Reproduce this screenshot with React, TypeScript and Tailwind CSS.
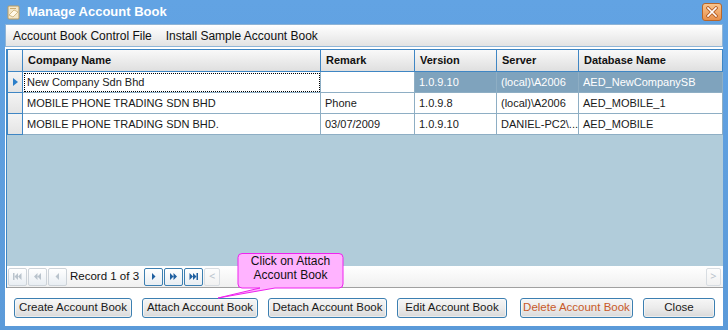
import React from "react";

const cols = [
  { key: "company", label: "Company Name", w: "w-[298px]" },
  { key: "remark", label: "Remark", w: "w-[94px]" },
  { key: "version", label: "Version", w: "w-[82px]" },
  { key: "server", label: "Server", w: "w-[82px]" },
  { key: "db", label: "Database Name", w: "w-[144px]" },
];

const rows = [
  { company: "New Company Sdn Bhd", remark: "", version: "1.0.9.10", server: "(local)\\A2006", db: "AED_NewCompanySB" },
  { company: "MOBILE PHONE TRADING SDN BHD", remark: "Phone", version: "1.0.9.8", server: "(local)\\A2006", db: "AED_MOBILE_1" },
  { company: "MOBILE PHONE TRADING SDN BHD.", remark: "03/07/2009", version: "1.0.9.10", server: "DANIEL-PC2\\...", db: "AED_MOBILE" },
];

const ui = { fontFamily: '"Liberation Sans", Arial, sans-serif' };
const grid = { fontFamily: '"Liberation Sans", Arial, sans-serif' };

function NavButton({ kind, enabled }: { kind: "first" | "prev2" | "prev" | "next" | "next2" | "last"; enabled: boolean }) {
  const c = enabled ? "#1f5fa0" : "#b9c3cc";
  return (
    <div
      className={
        "w-[19px] h-[18px] rounded-[2px] border flex items-center justify-center bg-gradient-to-b from-white to-[#e9eef3] " +
        (enabled ? "border-[#3c7fb1]" : "border-[#cdd3d9]")
      }
    >
      <svg width="11" height="9" viewBox="0 0 11 9">
        {kind === "first" && (
          <>
            <rect x="1" y="1" width="1.5" height="7" fill={c} />
            <path d="M6 1 L2.5 4.5 L6 8 Z M9.5 1 L6 4.5 L9.5 8 Z" fill={c} />
          </>
        )}
        {kind === "prev2" && <path d="M5.5 1 L2 4.5 L5.5 8 Z M9 1 L5.5 4.5 L9 8 Z" fill={c} />}
        {kind === "prev" && <path d="M7 1 L3.5 4.5 L7 8 Z" fill={c} />}
        {kind === "next" && <path d="M4 1 L7.5 4.5 L4 8 Z" fill={c} />}
        {kind === "next2" && <path d="M2 1 L5.5 4.5 L2 8 Z M5.5 1 L9 4.5 L5.5 8 Z" fill={c} />}
        {kind === "last" && (
          <>
            <path d="M1.5 1 L5 4.5 L1.5 8 Z M5 1 L8.5 4.5 L5 8 Z" fill={c} />
            <rect x="8.5" y="1" width="1.5" height="7" fill={c} />
          </>
        )}
      </svg>
    </div>
  );
}

function Btn({ label, w, danger }: { label: string; w: string; danger?: boolean }) {
  return (
    <div
      className={
        w +
        " h-[20px] rounded-[3px] border border-[#3c7fb1] bg-gradient-to-b from-[#f6f6f6] via-[#ebebeb] to-[#d9d9d9] flex items-center justify-center whitespace-nowrap text-[11.5px] leading-none shadow-[inset_0_0_0_1px_#ffffff80] " +
        (danger ? "text-[#c85a2a]" : "text-[#1a1a1a]")
      }
      style={ui}
    >
      {label}
    </div>
  );
}

export default function App() {
  return (
    <div className="w-[728px] h-[330px] overflow-hidden bg-gradient-to-b from-[#62a3e3] to-[#5b9ad9] flex flex-col relative">
      {/* title bar */}
      <div className="h-[24px] flex items-center pl-[6px] pr-[6px] shrink-0">
        <svg width="15" height="15" viewBox="0 0 15 15">
          <rect x="2" y="1" width="11" height="13" rx="1" fill="#f3e6c8" stroke="#b89a60" />
          <path d="M3 10 L8 5 L12 7 L7 12 Z" fill="#fff8e8" stroke="#c9ab70" strokeWidth="0.8" />
          <rect x="4" y="3" width="6" height="1" fill="#c9ab70" />
        </svg>
        <span className="ml-[6px] text-white font-bold text-[13px]" style={ui}>
          Manage Account Book
        </span>
        <div className="ml-auto w-[20px] h-[18px] rounded-[3px] border border-[#b8662a] bg-gradient-to-b from-[#f8c58e] to-[#e8904a] flex items-center justify-center">
          <svg width="12" height="12" viewBox="0 0 12 12">
            <path d="M2 2 L10 10 M10 2 L2 10" stroke="#b5602a" strokeWidth="3.4" strokeLinecap="square" />
            <path d="M2 2 L10 10 M10 2 L2 10" stroke="#ffffff" strokeWidth="1.6" strokeLinecap="square" />
          </svg>
        </div>
      </div>

      {/* client */}
      <div className="flex-1 mx-[5px] mb-[4px] bg-white flex flex-col">
        {/* menu */}
        <div className="h-[23px] shrink-0 border border-[#8fb4d6] bg-gradient-to-b from-white to-[#e3e3e3] flex items-center gap-[14px] pl-[7px] text-[12px] text-[#111]" style={ui}>
          <span>Account Book Control File</span>
          <span>Install Sample Account Book</span>
        </div>

        {/* grid */}
        <div className="mt-[2px] ml-[1px] h-[239px] shrink-0 flex flex-col border-l border-[#3f86c4] bg-[#b1ccda]">
          {/* header */}
          <div className="flex h-[23px] bg-gradient-to-b from-[#fafafa] to-[#dedede]">
            <div className="w-[16px] border border-[#3f86c4]" />
            {cols.map((c) => (
              <div
                key={c.key}
                className={c.w + " border border-l-0 border-[#3f86c4] flex items-center pl-[5px] text-[11px] font-bold text-[#111]"}
                style={grid}
              >
                {c.label}
              </div>
            ))}
          </div>
          {/* rows */}
          {rows.map((r, i) => (
            <div key={i} className="flex h-[21px] bg-white">
              <div className="w-[16px] border border-t-0 border-[#3f86c4] bg-gradient-to-b from-[#f4f4f4] to-[#e4e4e4] flex items-center justify-center">
                {i === 0 && (
                  <svg width="5" height="8" viewBox="0 0 5 8">
                    <path d="M0 0 L5 4 L0 8 Z" fill="#2d7fc9" />
                  </svg>
                )}
              </div>
              {cols.map((c) => {
                const sel = i === 0 && (c.key === "version" || c.key === "server" || c.key === "db");
                const focus = i === 0 && c.key === "company";
                return (
                  <div
                    key={c.key}
                    className={
                      c.w +
                      " border-r border-b border-[#8eaec4] flex items-center pl-[4px] text-[11px] whitespace-nowrap overflow-hidden " +
                      (sel ? "bg-[#7fa3bd] text-white" : "text-[#1a1a1a]") +
                      (focus ? " outline outline-1 outline-dotted outline-black -outline-offset-2" : "")
                    }
                    style={grid}
                  >
                    {(r as any)[c.key]}
                  </div>
                );
              })}
            </div>
          ))}
          <div className="flex-1" />
          {/* navigator */}
          <div className="h-[22px] bg-gradient-to-b from-white to-[#f0f0f0] flex items-center pl-[1px] border-b border-[#a0a0a0]">
            <div className="flex gap-[1px]">
              <NavButton kind="first" enabled={false} />
              <NavButton kind="prev2" enabled={false} />
              <NavButton kind="prev" enabled={false} />
            </div>
            <span className="ml-[3px] mr-[5px] text-[11.5px] text-[#111] whitespace-nowrap" style={ui}>
              Record 1 of 3
            </span>
            <div className="flex gap-[1px]">
              <NavButton kind="next" enabled />
              <NavButton kind="next2" enabled />
              <NavButton kind="last" enabled />
            </div>
            <div className="ml-[1px] w-[16px] h-[18px] border border-[#d8dde2] rounded-[2px] flex items-center justify-center text-[#b9c3cc] text-[11px]">
              &lt;
            </div>
            <div className="flex-1" />
            <div className="mr-[2px] w-[15px] h-[18px] border border-[#d8dde2] rounded-[2px] flex items-center justify-center text-[#b9c3cc] text-[11px]">
              &gt;
            </div>
          </div>
        </div>

        {/* buttons */}
        <div className="flex-1 flex items-center pl-[9px] pt-[2px]">
          <Btn label="Create Account Book" w="w-[118px]" />
          <div className="w-[10px]" />
          <Btn label="Attach Account Book" w="w-[116px]" />
          <div className="w-[10px]" />
          <Btn label="Detach Account Book" w="w-[119px]" />
          <div className="w-[10px]" />
          <Btn label="Edit Account Book" w="w-[110px]" />
          <div className="w-[13px]" />
          <Btn label="Delete Account Book" w="w-[113px]" danger />
          <div className="w-[10px]" />
          <Btn label="Close" w="w-[72px]" />
        </div>
      </div>

      {/* callout */}
      <div className="absolute left-[215px] top-[252px] w-[132px] h-[48px]">
        <svg width="132" height="48" viewBox="0 0 132 48" className="absolute inset-0">
          <path
            d="M27 1.5 H124 Q128 1.5 128 5.5 V32 Q128 36 124 36 H60 L3 46 L45 36 H27 Q23 36 23 32 V5.5 Q23 1.5 27 1.5 Z"
            fill="#ffb3ff"
            stroke="#ee22ee"
            strokeWidth="1"
          />
        </svg>
        <div className="absolute left-[23px] top-[2px] w-[105px] text-center text-[12px] leading-[14px] text-[#111]" style={grid}>
          Click on Attach
          <br />
          Account Book
        </div>
      </div>
    </div>
  );
}
